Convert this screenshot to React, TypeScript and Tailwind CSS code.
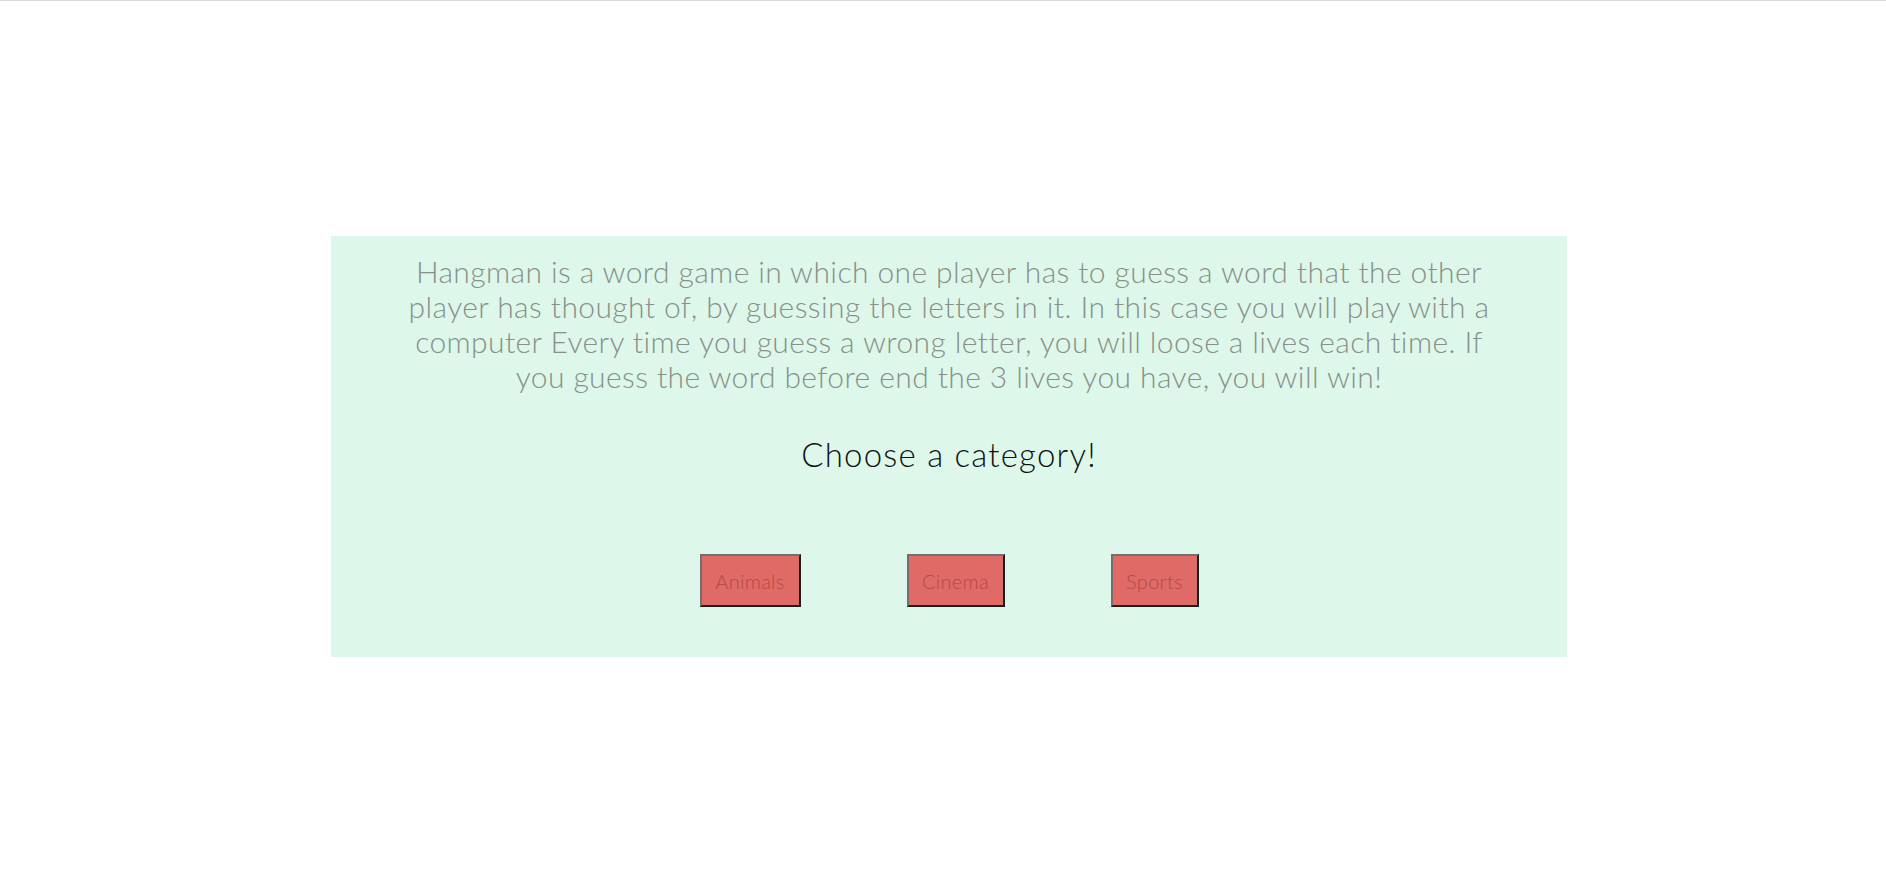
import React from 'react';

const categories = ['Animals', 'Cinema', 'Sports'];

const widths: Record<string, string> = {
  Animals: 'w-[101px]',
  Cinema: 'w-[98px]',
  Sports: 'w-[88px]',
};

export default function App() {
  return (
    <div className="min-h-screen bg-white font-['Lato',sans-serif]">
      <div className="h-px bg-[#d9d9d9]" />

      {/* game intro */}
      <div className="ml-[331px] mt-[235px] w-[1236px] bg-[#ddf8ea] pt-[18px] pb-[50px]">
        <p className="mx-auto w-[1150px] text-center text-[30px] leading-[35px] tracking-[0.4px] font-light text-[#899089]">
          Hangman is a word game in which one player has to guess a word that the other
          <br />
          player has thought of, by guessing the letters in it. In this case you will play with a
          <br />
          computer Every time you guess a wrong letter, you will loose a lives each time. If
          <br />
          you guess the word before end the 3 lives you have, you will win!
        </p>

        <h2 className="mt-[41px] text-center text-[33px] leading-[38px] tracking-[1.2px] font-light text-[#111]">
          Choose a category!
        </h2>

        <div className="mt-[81px] flex justify-center gap-[106px]">
          {categories.map((cat) => (
            <button
              key={cat}
              className={`${widths[cat]} h-[53px] border-2 border-t-[#707070] border-l-[#707070] border-b-[#1e1e1e] border-r-[#1e1e1e] bg-[#e06b66] text-[20px] tracking-[0.3px] font-light text-[#b04a48]`}
            >
              {cat}
            </button>
          ))}
        </div>
      </div>
    </div>
  );
}
